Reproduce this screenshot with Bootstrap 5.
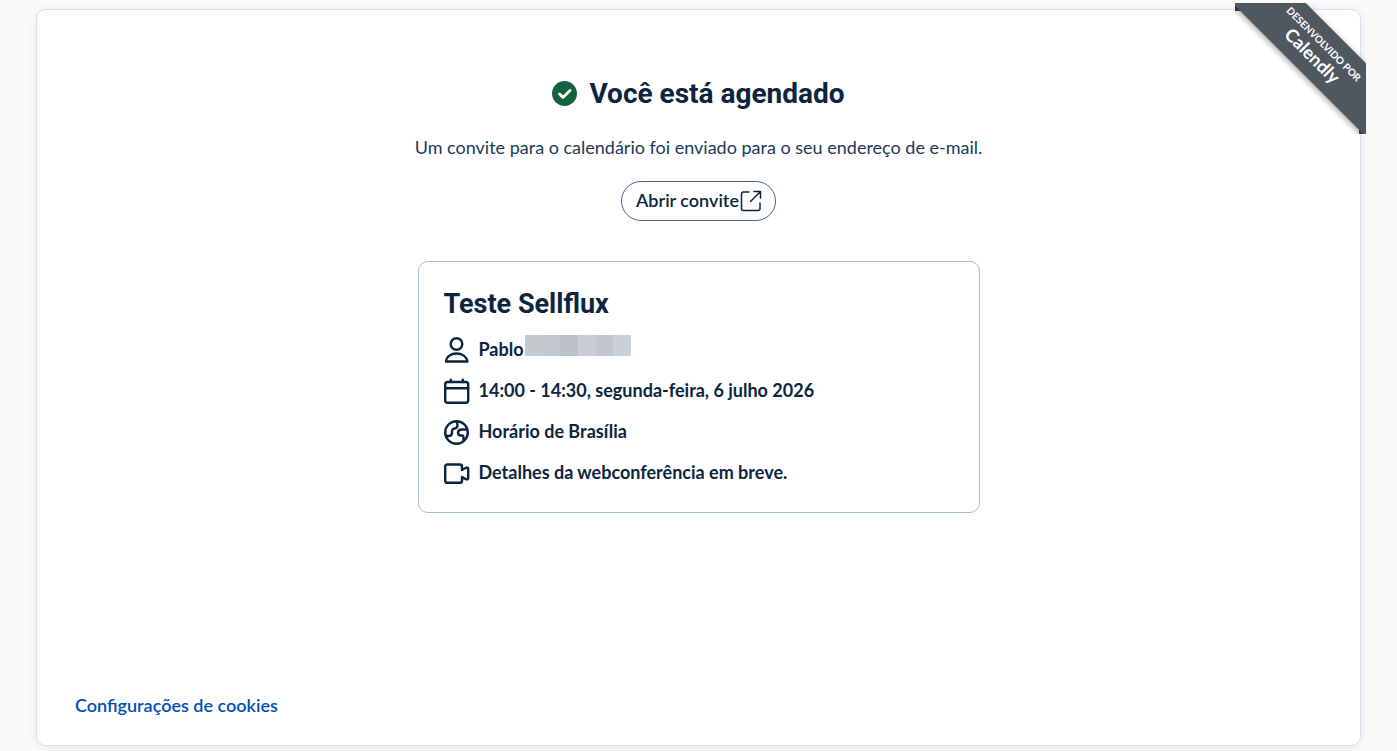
<!DOCTYPE html>
<html lang="pt-BR">
<head>
<meta charset="utf-8">
<meta name="viewport" content="width=device-width, initial-scale=1">
<title>Você está agendado</title>
<link href="https://cdn.jsdelivr.net/npm/bootstrap@5.3.0/dist/css/bootstrap.min.css" rel="stylesheet">
<style>
  body { background: #fafafa; color: #0b2540; font-family: Lato, "Liberation Sans", sans-serif; font-size: 18px; line-height: 24px; }
  .page { padding: 9px 36px 5px; }
  .booking { min-height: calc(100vh - 14px); background: #fff; border: 1px solid #d4e0ed; border-radius: 10px; box-shadow: 0 1px 10px rgba(0,0,0,.08); }
  .booking-main { padding-top: 66px; }
  .title { font-family: Roboto, "Liberation Sans", sans-serif; font-size: 28px; line-height: 36px; font-weight: 700; }
  .details .title { font-size: 27px; }
  .intro { color: #1b3a55; margin: 23px 0 22px; }
  .btn-invite { height: 40px; padding: 0 13px 2px 14px; border: 1px solid #476788; border-radius: 20px; color: #0b2540; font-size: 18px; line-height: 24px; font-weight: 600; gap: 1px; }
  .btn-invite:hover { background: #f2f8ff; border-color: #476788; }
  .details { width: 562px; max-width: 100%; margin-top: 40px; padding: 24px 25px 26px; border: 1px solid #a6bbd1; border-radius: 10px; }
  .details ul { gap: 15px; margin-top: 15px; font-weight: 700; }
  .details li { gap: 9px; line-height: 24px; height: 26px; }
  .details li > span:not(.redacted) { padding-bottom: 2px; }
  .redacted { width: 106px; height: 21px; margin: -10px 0 0 -8px; background: linear-gradient(90deg, #c4c9cd 0 17%, #c3c8ce 17% 33%, #bdc1cb 33% 50%, #c9ccd7 50% 67%, #c1c5cf 67% 83%, #cbcfd8 83%); }
  .booking-foot { padding: 0 38px 28px; font-weight: 600; }
  .booking-foot a { color: #004eba; }
  .ribbon { top: -7px; right: -6px; width: 131px; height: 131px; overflow: hidden; }
  .ribbon::before, .ribbon::after { content: ""; position: absolute; background: #434a52; }
  .ribbon::before { left: 0; top: 0; width: 12px; height: 8px; }
  .ribbon::after { right: 0; bottom: 0; width: 7px; height: 12px; }
  .ribbon a { z-index: 1; left: -18px; top: 22px; width: 200px; height: 52px; padding-top: 9px; transform: rotate(45deg); background: #50585f; box-shadow: 0 2px 6px rgba(0,0,0,.35); font-weight: 700; }
  .ribbon small { font-size: 10px; line-height: 14px; }
  .ribbon span { font-size: 18px; line-height: 18px; }
</style>
</head>
<body>
<div class="page">
  <div class="booking position-relative d-flex flex-column">
    <div class="ribbon position-absolute">
      <a href="#" class="position-absolute d-flex flex-column align-items-center text-white text-decoration-none"><small>DESENVOLVIDO POR</small><span>Calendly</span></a>
    </div>
    <main class="booking-main flex-grow-1 d-flex flex-column align-items-center px-3">
      <div class="d-flex align-items-center">
        <svg class="me-2" width="29" height="26" viewBox="0 0 29 26" aria-hidden="true"><circle cx="12.500" cy="12.500" r="12.500" fill="#12633d"/><path d="M7.500 13l3.500 3.500 7-7" fill="none" stroke="#fff" stroke-width="2.800" stroke-linecap="round" stroke-linejoin="round"/></svg>
        <h1 class="title m-0">Você está agendado</h1>
      </div>
      <p class="intro text-center">Um convite para o calendário foi enviado para o seu endereço de e-mail.</p>
      <button type="button" class="btn btn-invite d-inline-flex align-items-center">Abrir convite
        <svg width="22" height="24" viewBox="0 -2 22 24" fill="none" stroke="currentColor" stroke-width="1.500" stroke-linecap="round" stroke-linejoin="round" aria-hidden="true"><path d="M9 2H3.500Q1.500 2 1.500 4V18.500Q1.500 20.500 3.500 20.500H18Q20 20.500 20 18.500V13M14 1.500h6.500V8M20.500 1.500L10.500 11.500"/></svg>
      </button>
      <section class="details">
        <h2 class="title m-0">Teste Sellflux</h2>
        <ul class="list-unstyled d-flex flex-column mb-0">
          <li class="d-flex align-items-center">
            <svg width="26" height="26" viewBox="0 0 26 26" fill="none" stroke="currentColor" stroke-width="2.400" stroke-linejoin="round" aria-hidden="true"><circle cx="12.500" cy="7" r="5.800"/><path d="M2 24.500C2.500 19.500 7 16.500 12.500 16.500S22.500 19.500 23.500 24.500Z"/></svg>
            <span>Pablo</span><span class="redacted"></span>
          </li>
          <li class="d-flex align-items-center">
            <svg width="26" height="26" viewBox="0 0 26 26" fill="none" stroke="currentColor" stroke-width="2.400" stroke-linecap="round" aria-hidden="true"><rect x="1.200" y="4" width="23" height="20.800" rx="2.500"/><path d="M1.200 10.200h23M6.800 1.700v2.300M18.800 1.700v2.300"/></svg>
            <span>14:00 - 14:30, segunda-feira, 6 julho 2026</span>
          </li>
          <li class="d-flex align-items-center">
            <svg width="26" height="26" viewBox="0 0 26 26" fill="none" stroke="currentColor" stroke-width="2.400" stroke-linejoin="round" aria-hidden="true"><circle cx="12.500" cy="13.500" r="11.300"/><path d="M1.500 17H4.500Q8 17 8 14V12.500Q8 10 10.500 9.500Q13.500 9 13.500 6.500Q13.500 4.500 12.500 2.500M23.500 10.500H18Q14 10.500 14 13.500Q14 16.500 17 16.500H18Q19.500 16.500 19.500 18.500V22"/></svg>
            <span>Horário de Brasília</span>
          </li>
          <li class="d-flex align-items-center">
            <svg width="26" height="26" viewBox="0 0 26 26" fill="none" stroke="currentColor" stroke-width="2.400" stroke-linejoin="round" aria-hidden="true"><path d="M3.200 4.500H16Q18 4.500 18 6.500V10L21.500 8Q24.200 7 24.200 9V18Q24.200 20 21.500 19L18 17V20.800Q18 22.800 16 22.800H3.200Q1.200 22.800 1.200 20.800V6.500Q1.200 4.500 3.200 4.500Z"/></svg>
            <span>Detalhes da webconferência em breve.</span>
          </li>
        </ul>
      </section>
    </main>
    <footer class="booking-foot"><a href="#" class="text-decoration-none">Configurações de cookies</a></footer>
  </div>
</div>
<script src="https://cdn.jsdelivr.net/npm/bootstrap@5.3.0/dist/js/bootstrap.bundle.min.js"></script>
</body>
</html>
